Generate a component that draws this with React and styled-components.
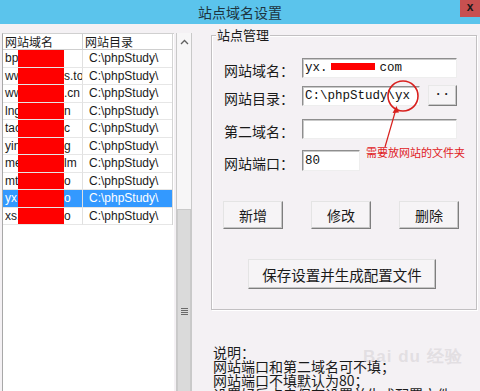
import React from "react";
import styled, { createGlobalStyle } from "styled-components";

const Global = createGlobalStyle`
  html, body { margin: 0; padding: 0; background: #f4f1f4; }
  body { font-family: "Noto Sans CJK SC", "Liberation Sans", sans-serif; }
  * { box-sizing: border-box; }
`;

const Window = styled.div`
  width: 480px;
  height: 391px;
  overflow: hidden;
  background: #f4f1f4;
  display: flex;
  flex-direction: column;
`;

const TitleBar = styled.div`
  height: 24px;
  flex: none;
  background: #5bc4ec;
  display: grid;
  grid-template-columns: 1fr auto 1fr;
`;

const Title = styled.div`
  grid-column: 2;
  font-size: 14px;
  line-height: 24px;
  color: #1d3440;
`;

const Close = styled.div`
  grid-column: 3;
  justify-self: end;
  width: 20px;
  height: 17px;
  background: #c75050;
  color: #1a1a1a;
  font: bold 12px/15px "Liberation Sans", sans-serif;
  text-align: center;
`;

const Body = styled.div`
  flex: 1;
  display: flex;
  min-height: 0;
`;

const ListPanel = styled.div`
  margin: 9px 0 0 2px;
  width: 190px;
  display: flex;
  flex: none;
  height: 400px;
`;

const ListArea = styled.div`
  width: 174px;
  background: #fff;
  border-left: 1px solid #a8a8a8;
  border-top: 1px solid #d0d0d0;
`;

const Table = styled.div`
  width: 170px;
  display: grid;
  grid-template-columns: 80px 89px;
  border-right: 1px solid #d4d4d4;
`;

const HeadCell = styled.div`
  height: 16px;
  font-size: 12px;
  line-height: 16px;
  color: #1a1a1a;
  padding-left: 2px;
  border-bottom: 1px solid #cfcfcf;
  border-right: ${(p) => (p.$first ? "1px solid #cfcfcf" : "none")};
  white-space: nowrap;
  overflow: hidden;
`;

const Cell = styled.div`
  height: 17.5px;
  font: 12px/17px "Liberation Sans", Arial, sans-serif;
  color: ${(p) => (p.$sel ? "#fff" : "#1a1a1a")};
  background: ${(p) => (p.$sel ? "#3399ff" : "#fff")};
  padding-left: ${(p) => (p.$first ? "2px" : "6px")};
  border-bottom: 1px solid #e6e6e6;
  border-right: ${(p) => (p.$first ? "1px solid #e0e0e0" : "none")};
  white-space: nowrap;
  overflow: hidden;
  position: relative;
`;

const DomainText = styled.span`
  display: grid;
  grid-template-columns: 59px auto;
`;

const Redact = styled.div`
  position: absolute;
  top: 0;
  bottom: 0;
  left: 15px;
  width: 46px;
  background: #ff0000;
`;

const Scrollbar = styled.div`
  width: 16px;
  margin-left: 2px;
  border-left: 1px solid #c9c9c9;
  border-right: 1px solid #c9c9c9;
  background: #f7f6f7;
  display: flex;
  flex-direction: column;
`;

const ArrowBtn = styled.div`
  height: 17px;
  display: flex;
  align-items: center;
  justify-content: center;
`;

const Track = styled.div`
  height: 159px;
`;

const Thumb = styled.div`
  height: 204px;
  background: #dadada;
  border: 1px solid #cacaca;
  display: flex;
  align-items: center;
  justify-content: center;
`;

const Grip = styled.div`
  width: 7px;
  height: 7px;
  background: repeating-linear-gradient(
    to bottom,
    #6a6a6a 0 1px,
    transparent 1px 2px
  );
`;

const RightPane = styled.div`
  flex: 1;
  display: flex;
  flex-direction: column;
`;

const GroupBox = styled.div`
  position: relative;
  margin: 11px 0 0 19px;
  width: 266px;
  height: 275px;
  flex: none;
  border: 1px solid #c2c0c2;
  box-shadow: inset 1px 1px 0 #fff, 1px 1px 0 #fff;
  display: flex;
  flex-direction: column;
`;

const Legend = styled.div`
  align-self: flex-start;
  margin: -8px 0 0 4px;
  padding: 0 1px;
  background: #f4f1f4;
  font-size: 13px;
  line-height: 14px;
  color: #1a1a1a;
`;

const Row = styled.div`
  display: flex;
  align-items: center;
  margin-top: ${(p) => p.$mt}px;
  padding-left: 12px;
`;

const Label = styled.div`
  width: 78px;
  flex: none;
  font-size: 14px;
  line-height: 16px;
  padding-top: 4px;
  color: #1a1a1a;
  white-space: nowrap;
`;

const Input = styled.div`
  width: ${(p) => p.$w}px;
  height: ${(p) => p.$h || 20}px;
  background: #fff;
  border: 1px solid;
  border-color: #8e8e8e #eeeeee #eeeeee #8e8e8e;
  box-shadow: inset 1px 1px 0 #c9c9c9;
  font: 12.5px/18px "Liberation Mono", "Courier New", monospace;
  color: #111;
  padding-left: 2px;
  white-space: nowrap;
  overflow: hidden;
  display: flex;
  align-items: center;
`;

const InlineRedact = styled.span`
  display: inline-block;
  width: 44px;
  height: 7px;
  background: #ff0000;
  margin: 0 5px 3px 3px;
`;

const SmallBtn = styled.div`
  width: 29px;
  height: 21px;
  margin-left: 8px;
  background: #f6f4f6;
  border: 1px solid;
  border-color: #e8e8e8 #7e7e7e #7e7e7e #e8e8e8;
  box-shadow: inset -1px -1px 0 #c8c8c8;
  font: bold 12px/16px "Liberation Sans", sans-serif;
  text-align: center;
  letter-spacing: 4px;
  padding-left: 4px;
  color: #222;
`;

const ButtonRow = styled.div`
  display: flex;
  gap: 28px;
  margin: ${(p) => p.$mt}px 0 0 ${(p) => p.$ml}px;
`;

const Button = styled.div`
  width: ${(p) => p.$w}px;
  height: ${(p) => p.$h}px;
  background: #f6f4f6;
  border: 1px solid;
  border-color: #e4e4e4 #7e7e7e #7e7e7e #e4e4e4;
  box-shadow: inset -1px -1px 0 #c6c6c6;
  display: flex;
  align-items: center;
  justify-content: center;
  font-size: ${(p) => p.$fs || 14}px;
  color: #1a1a1a;
`;

const Overlay = styled.svg`
  position: absolute;
  left: 150px;
  top: 40px;
  overflow: visible;
`;

const Note = styled.div`
  position: absolute;
  left: 154px;
  top: 109px;
  font-size: 11px;
  line-height: 14px;
  color: #e0201c;
  white-space: nowrap;
`;

const Notes = styled.div`
  position: relative;
  margin: 35px 0 0 21px;
  font-size: 14px;
  line-height: 14px;
  color: #1a1a1a;
  white-space: nowrap;
`;

const Watermark = styled.div`
  position: absolute;
  left: 150px;
  top: 2px;
  font: bold 17px/20px "Liberation Sans", sans-serif;
  color: rgba(205, 200, 205, 0.45);
  letter-spacing: 1px;
  pointer-events: none;
`;

const rows = [
  ["bp", ""],
  ["ww", "s.to"],
  ["ww", ".cn"],
  ["lng", "n"],
  ["tac", "c"],
  ["yin", "g"],
  ["me", "lm"],
  ["mt", "o"],
  ["yx", "o"],
  ["xs.", "o"],
];

export default function App() {
  return (
    <>
      <Global />
      <Window>
        <TitleBar>
          <Title>站点域名设置</Title>
          <Close>x</Close>
        </TitleBar>
        <Body>
          <ListPanel>
            <ListArea>
              <Table>
                <HeadCell $first>网站域名</HeadCell>
                <HeadCell>网站目录</HeadCell>
                {rows.map(([a, b], i) => (
                  <React.Fragment key={i}>
                    <Cell $first $sel={i === 8}>
                      <DomainText>
                        <span>{a}</span>
                        <span>{b}</span>
                      </DomainText>
                      <Redact />
                    </Cell>
                    <Cell $sel={i === 8}>C:\phpStudy\</Cell>
                  </React.Fragment>
                ))}
              </Table>
            </ListArea>
            <Scrollbar>
              <ArrowBtn>
                <svg width="9" height="6" viewBox="0 0 9 6">
                  <path d="M1 5 L4.5 1.5 L8 5" fill="none" stroke="#606060" strokeWidth="1.3" />
                </svg>
              </ArrowBtn>
              <Track />
              <Thumb>
                <Grip />
              </Thumb>
            </Scrollbar>
          </ListPanel>
          <RightPane>
            <GroupBox>
              <Legend>站点管理</Legend>
              <Row $mt={16}>
                <Label>网站域名：</Label>
                <Input $w={155}>
                  yx.<InlineRedact />com
                </Input>
              </Row>
              <Row $mt={7}>
                <Label>网站目录：</Label>
                <Input $w={118}>C:\phpStudy\yx</Input>
                <SmallBtn>··</SmallBtn>
              </Row>
              <Row $mt={13}>
                <Label>第二域名：</Label>
                <Input $w={155} />
              </Row>
              <Row $mt={11}>
                <Label>网站端口：</Label>
                <Input $w={58} $h={21}>80</Input>
              </Row>
              <ButtonRow $mt={30} $ml={11}>
                <Button $w={60} $h={28}>新增</Button>
                <Button $w={60} $h={28}>修改</Button>
                <Button $w={60} $h={28}>删除</Button>
              </ButtonRow>
              <ButtonRow $mt={30} $ml={36}>
                <Button $w={188} $h={30} $fs={14.5}>保存设置并生成配置文件</Button>
              </ButtonRow>
              <Overlay width="60" height="75" viewBox="0 0 60 75">
                <ellipse cx="41" cy="20" rx="15" ry="15" fill="none" stroke="#d8201e" strokeWidth="1.6" />
                <line x1="34" y1="33" x2="23" y2="71" stroke="#d8201e" strokeWidth="1.2" />
                <path d="M34.5 30 L30.5 37 L37 36.5 Z" fill="#d8201e" />
              </Overlay>
              <Note>需要放网站的文件夹</Note>
            </GroupBox>
            <Notes>
              <Watermark>Bai du 经验</Watermark>
              <div>说明：</div>
              <div>网站端口和第二域名可不填；</div>
              <div>网站端口不填默认为80；</div>
              <div>设置好后点击保存设置并生成配置文件</div>
            </Notes>
          </RightPane>
        </Body>
      </Window>
    </>
  );
}
